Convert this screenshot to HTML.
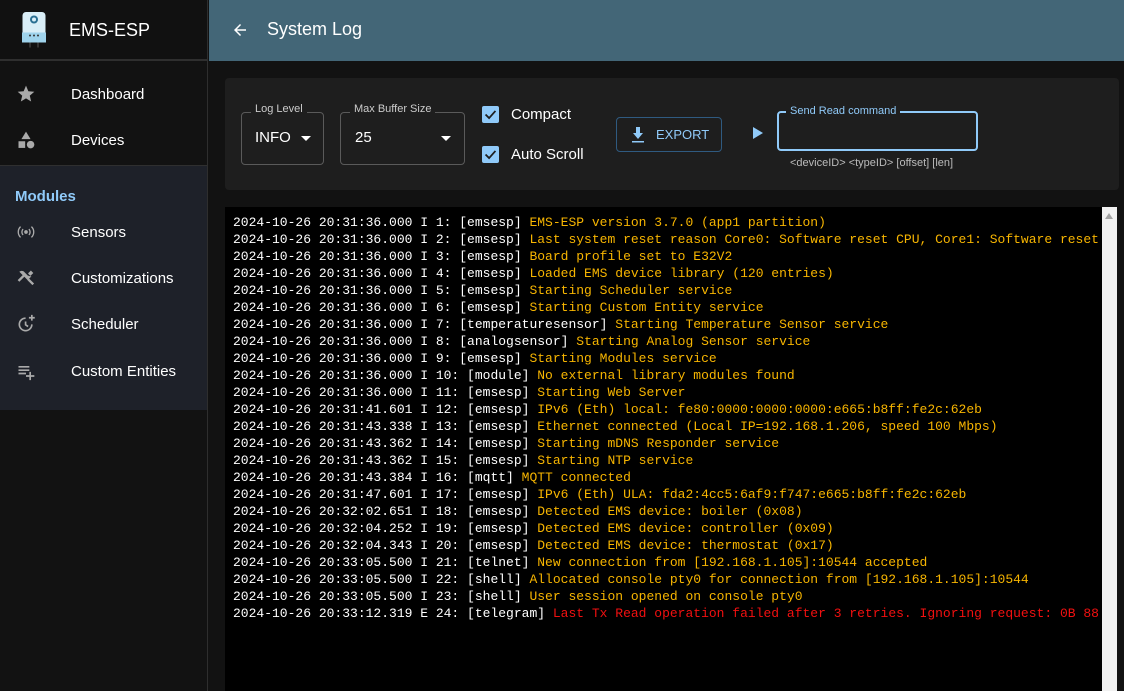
<!DOCTYPE html>
<html><head><meta charset="utf-8"><style>
*{box-sizing:border-box;margin:0;padding:0}
body{width:1124px;height:691px;overflow:hidden;background:#121212;font-family:"Liberation Sans",sans-serif;color:#fff;position:relative}
.side{position:absolute;left:0;top:0;width:208px;height:691px;background:#121212;border-right:1px solid #2e2e2e}
.brand{height:61px;background:#111;border-bottom:2px solid #2f2f2f;display:flex;align-items:center}
.brand span{position:absolute;left:69px;top:20px;font-size:18px}
.item{position:absolute;left:0;width:207px;height:46px;font-size:15px}
.item .t{position:absolute;left:71px;top:15px}
.item svg{position:absolute;left:16px;top:13px}
.mods{position:absolute;top:165px;left:0;width:207px;height:245px;background:#1e2129;border-top:1px solid #2f2f2f}
.hdr{position:absolute;left:209px;top:0;width:915px;height:61px;background:#436677}
.hdr .t{position:absolute;left:58px;top:19px;font-size:18px}
.panel{position:absolute;left:225px;top:78px;width:894px;height:112px;background:#1e1e1e;border-radius:4px}
.fs{position:absolute;border:1px solid #5a5a5a;border-radius:4px}
.lg{position:absolute;font-size:11px;color:#ccc;background:#1e1e1e;padding:0 4px}
.log{position:absolute;left:225px;top:207px;width:877px;height:484px;background:#000;font-family:"Liberation Mono",monospace;font-size:13px;line-height:17px;padding:7px 0 0 8px;white-space:pre;overflow:hidden;color:#fff}
.o{color:#f7b500}.r{color:#f21010}
.sb{position:absolute;left:1102px;top:207px;width:15px;height:484px;background:#f1f1f1}
.cb{position:absolute;width:17px;height:17px;background:#90caf9;border-radius:2px}
</style></head><body>
<div class="side">
 <div class="brand">
  <svg style="position:absolute;left:21px;top:10px" width="26" height="39" viewBox="0 0 26 38"><rect x="1" y="1" width="24" height="31" rx="4" fill="#d9eef7" stroke="#111" stroke-width="1"/><rect x="1" y="22" width="24" height="10" fill="#9fd3ec"/><circle cx="13" cy="9" r="4" fill="#2a6f92"/><circle cx="13" cy="9" r="2" fill="#d9eef7"/><circle cx="9" cy="25" r="1" fill="#333"/><circle cx="13" cy="25" r="1" fill="#333"/><circle cx="17" cy="25" r="1" fill="#333"/><rect x="8" y="32" width="2" height="5" fill="#333"/><rect x="16" y="32" width="2" height="5" fill="#333"/></svg>
  <span>EMS-ESP</span>
 </div>
 <div class="item" style="top:71px"><svg width="20" height="20" viewBox="0 0 24 24"><path fill="#aaa" d="M12 17.27L18.18 21l-1.64-7.03L22 9.24l-7.19-.61L12 2 9.19 8.63 2 9.24l5.46 4.73L5.82 21z"/></svg><span class="t">Dashboard</span></div>
 <div class="item" style="top:117px"><svg width="20" height="20" viewBox="0 0 24 24"><path fill="#aaa" d="M12 2l-5.5 9h11z"/><circle cx="17.5" cy="17.5" r="4.5" fill="#aaa"/><path fill="#aaa" d="M3 13.5h8v8H3z"/></svg><span class="t">Devices</span></div>
 <div class="mods">
  <div style="position:absolute;left:15px;top:22px;font-size:15px;font-weight:bold;color:#90caf9">Modules</div>
 </div>
 <div class="item" style="top:209px"><svg width="20" height="20" viewBox="0 0 24 24"><circle cx="12" cy="12" r="2.2" fill="#aaa"/><path fill="none" stroke="#aaa" stroke-width="1.6" d="M8.5 8.5a5 5 0 000 7M15.5 8.5a5 5 0 010 7M5.5 5.5a9 9 0 000 13M18.5 5.5a9 9 0 010 13"/></svg><span class="t">Sensors</span></div>
 <div class="item" style="top:255px"><svg width="20" height="20" viewBox="0 0 24 24"><path fill="#aaa" d="M21.7 18.6l-5.9-5.9-2 2 5.9 5.9 2-2zM14.5 9.5l1.4-1.4 1.4 1.4 3.5-3.5-1.4-1.4L17.9 3l-3.5 3.5 1.4 1.4-1.4 1.4-4-4C9 3 6 3 4 4.5l4 4-6 6 2 2 6-6 4 4 4.5-4.5z"/></svg><span class="t">Customizations</span></div>
 <div class="item" style="top:301px"><svg width="20" height="20" viewBox="0 0 24 24"><path fill="none" stroke="#aaa" stroke-width="2" d="M19 12.5A7.5 7.5 0 1111.5 5M11.5 9v4l3 2M19 1v7M15.5 4.5h7"/></svg><span class="t">Scheduler</span></div>
 <div class="item" style="top:348px"><svg width="20" height="20" viewBox="0 0 24 24"><path fill="#aaa" d="M3 6h13v2H3zM3 10h13v2H3zM3 14h9v2H3zM16 13h2v4h4v2h-4v4h-2v-4h-4v-2h4z"/></svg><span class="t">Custom Entities</span></div>
</div>
<div class="hdr"><svg style="position:absolute;left:22px;top:21px" width="18" height="18" viewBox="0 0 24 24"><path fill="#fff" d="M20 11H7.83l5.59-5.59L12 4l-8 8 8 8 1.41-1.41L7.83 13H20z"/></svg><span class="t">System Log</span></div>
<div class="panel">
 <div class="fs" style="left:16px;top:34px;width:83px;height:53px"></div><div class="lg" style="left:26px;top:25px">Log Level</div>
 <div style="position:absolute;left:30px;top:51px;font-size:15px">INFO</div>
 <div style="position:absolute;left:76px;top:58px;border:5px solid transparent;border-top-color:#fff"></div>
 <div class="fs" style="left:115px;top:34px;width:125px;height:53px"></div><div class="lg" style="left:125px;top:25px">Max Buffer Size</div>
 <div style="position:absolute;left:130px;top:51px;font-size:15px">25</div>
 <div style="position:absolute;left:216px;top:58px;border:5px solid transparent;border-top-color:#fff"></div>
 <div class="cb" style="left:257px;top:28px"><svg width="17" height="17" viewBox="0 0 24 24"><path fill="none" stroke="#1e1e1e" stroke-width="2.5" d="M5 12l5 5 9-10"/></svg></div>
 <div style="position:absolute;left:286px;top:28px;font-size:15px">Compact</div>
 <div class="cb" style="left:257px;top:68px"><svg width="17" height="17" viewBox="0 0 24 24"><path fill="none" stroke="#1e1e1e" stroke-width="2.5" d="M5 12l5 5 9-10"/></svg></div>
 <div style="position:absolute;left:286px;top:68px;font-size:15px">Auto Scroll</div>
 <div style="position:absolute;left:391px;top:39px;width:106px;height:35px;border:1px solid #2f5a80;border-radius:4px;color:#90caf9;font-size:13px">
  <svg style="position:absolute;left:13px;top:8px" width="16" height="17" viewBox="0 0 16 17"><path fill="#90caf9" d="M6 1h4v6h3l-5 6-5-6h3zM2 15h12v1.5H2z"/></svg>
  <span style="position:absolute;left:39px;top:9px">EXPORT</span></div>
 <div style="position:absolute;left:528px;top:49px;border:6px solid transparent;border-left:10px solid #90caf9;border-right:0"></div>
 <div class="fs" style="left:552px;top:33px;width:201px;height:40px;border:2px solid #90caf9"></div>
 <div class="lg" style="left:561px;top:27px;color:#90caf9">Send Read command</div>
 <div style="position:absolute;left:565px;top:79px;font-size:11px;color:#bbb">&lt;deviceID&gt; &lt;typeID&gt; [offset] [len]</div>
</div>
<div class="log">2024-10-26 20:31:36.000 I 1: [emsesp] <span class="o">EMS-ESP version 3.7.0 (app1 partition)</span>
2024-10-26 20:31:36.000 I 2: [emsesp] <span class="o">Last system reset reason Core0: Software reset CPU, Core1: Software reset CPU</span>
2024-10-26 20:31:36.000 I 3: [emsesp] <span class="o">Board profile set to E32V2</span>
2024-10-26 20:31:36.000 I 4: [emsesp] <span class="o">Loaded EMS device library (120 entries)</span>
2024-10-26 20:31:36.000 I 5: [emsesp] <span class="o">Starting Scheduler service</span>
2024-10-26 20:31:36.000 I 6: [emsesp] <span class="o">Starting Custom Entity service</span>
2024-10-26 20:31:36.000 I 7: [temperaturesensor] <span class="o">Starting Temperature Sensor service</span>
2024-10-26 20:31:36.000 I 8: [analogsensor] <span class="o">Starting Analog Sensor service</span>
2024-10-26 20:31:36.000 I 9: [emsesp] <span class="o">Starting Modules service</span>
2024-10-26 20:31:36.000 I 10: [module] <span class="o">No external library modules found</span>
2024-10-26 20:31:36.000 I 11: [emsesp] <span class="o">Starting Web Server</span>
2024-10-26 20:31:41.601 I 12: [emsesp] <span class="o">IPv6 (Eth) local: fe80:0000:0000:0000:e665:b8ff:fe2c:62eb</span>
2024-10-26 20:31:43.338 I 13: [emsesp] <span class="o">Ethernet connected (Local IP=192.168.1.206, speed 100 Mbps)</span>
2024-10-26 20:31:43.362 I 14: [emsesp] <span class="o">Starting mDNS Responder service</span>
2024-10-26 20:31:43.362 I 15: [emsesp] <span class="o">Starting NTP service</span>
2024-10-26 20:31:43.384 I 16: [mqtt] <span class="o">MQTT connected</span>
2024-10-26 20:31:47.601 I 17: [emsesp] <span class="o">IPv6 (Eth) ULA: fda2:4cc5:6af9:f747:e665:b8ff:fe2c:62eb</span>
2024-10-26 20:32:02.651 I 18: [emsesp] <span class="o">Detected EMS device: boiler (0x08)</span>
2024-10-26 20:32:04.252 I 19: [emsesp] <span class="o">Detected EMS device: controller (0x09)</span>
2024-10-26 20:32:04.343 I 20: [emsesp] <span class="o">Detected EMS device: thermostat (0x17)</span>
2024-10-26 20:33:05.500 I 21: [telnet] <span class="o">New connection from [192.168.1.105]:10544 accepted</span>
2024-10-26 20:33:05.500 I 22: [shell] <span class="o">Allocated console pty0 for connection from [192.168.1.105]:10544</span>
2024-10-26 20:33:05.500 I 23: [shell] <span class="o">User session opened on console pty0</span>
2024-10-26 20:33:12.319 E 24: [telegram] <span class="r">Last Tx Read operation failed after 3 retries. Ignoring request: 0B 88 02 00 20</span></div>
<div class="sb"><div style="position:absolute;left:3px;top:6px;border:4px solid transparent;border-bottom:6px solid #a3a3a3;border-top:0"></div></div>
</body></html>
